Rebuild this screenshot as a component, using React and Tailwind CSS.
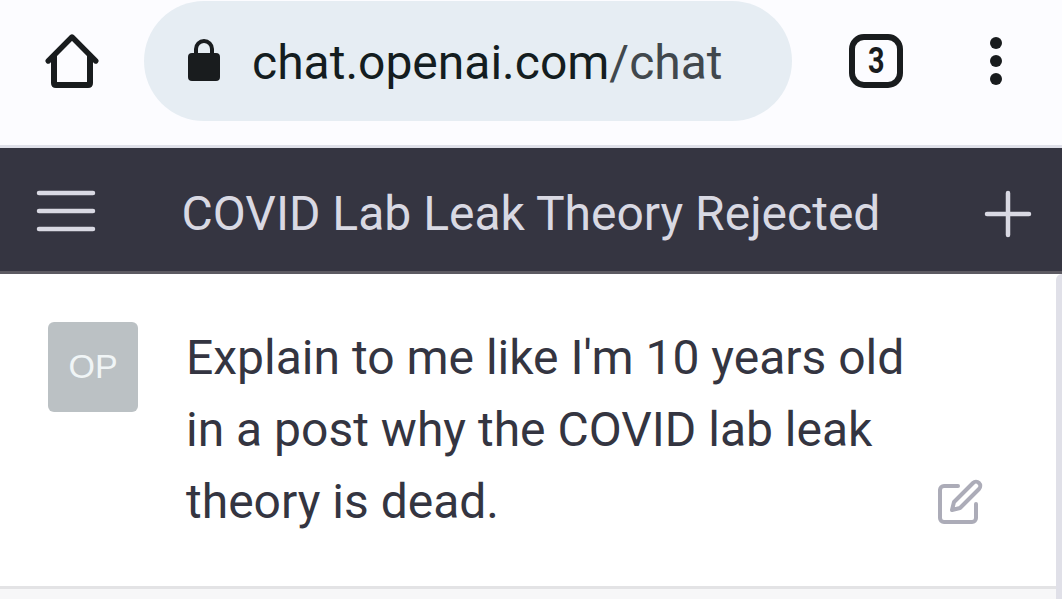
const message = ["Explain to me like I'm 10 years old", "in a post why the COVID lab leak", "theory is dead."];

function BrowserBar() {
  return (
    <div className="flex h-[148px] items-start border-b-[3px] border-[#dfe0e9] bg-[#fcfcff] text-[#191c1e]">
      <svg className="mt-[31px] ml-[42px] h-[60px] w-[60px] shrink-0" viewBox="0 0 60 60" fill="none" stroke="currentColor" strokeWidth="6">
        <path d="M12 24v28q0 2 2 2h32q2 0 2-2V24" />
        <path d="M6.2 30 30 6l23.8 24" strokeWidth="5.4" strokeLinecap="round" strokeLinejoin="round" />
      </svg>

      <div className="mt-px ml-[42px] flex h-[120px] w-[648px] shrink-0 items-center rounded-full bg-[#e6edf3] pl-11">
        <svg className="-mt-0.5 h-[42px] w-8 shrink-0" viewBox="0 0 32 42" fill="none">
          <rect y="14" width="32" height="28" rx="4" fill="currentColor" />
          <path d="M8 16V10a8 8 0 0 1 16 0v6" stroke="currentColor" strokeWidth="4" />
        </svg>
        <span className="mt-1 ml-8 text-[48px] leading-[60px] whitespace-nowrap text-[#141d20]">
          chat.openai.com<span className="text-[#41484d]">/chat</span>
        </span>
      </div>

      <div className="mt-[34px] ml-[57px] flex h-[54px] w-[54px] shrink-0 items-center justify-center rounded-[15px] border-[6px] border-[#191c1e] text-[36px] leading-none font-bold">
        <span className="scale-x-80">3</span>
      </div>

      <div className="mt-[37px] ml-[87px] flex flex-col gap-1.5">
        <span className="h-3 w-3 rounded-full bg-current" />
        <span className="h-3 w-3 rounded-full bg-current" />
        <span className="h-3 w-3 rounded-full bg-current" />
      </div>
    </div>
  );
}

function ChatHeader() {
  return (
    <header className="flex h-[126px] items-start border-b-[3px] border-[#5c5a62] bg-[#353541] text-[#d9d9e3]">
      <svg className="mt-[27px] ml-[30px] h-[72px] w-[72px] shrink-0" viewBox="0 0 24 24" fill="none" stroke="currentColor" strokeWidth="1.5" strokeLinecap="round">
        <path d="M3 6h18M3 12h18M3 18h18" />
      </svg>
      <h1 className="mt-[30px] flex-1 pr-3 text-center text-[48px] leading-[72px] whitespace-nowrap">COVID Lab Leak Theory Rejected</h1>
      <svg className="mt-[30px] mr-[18px] h-[72px] w-[72px] shrink-0" viewBox="0 0 24 24" fill="none" stroke="currentColor" strokeWidth="1.5" strokeLinecap="round">
        <path d="M12 5v14M5 12h14" />
      </svg>
    </header>
  );
}

export default function App() {
  return (
    <div className="flex h-[599px] w-[1062px] flex-col overflow-hidden bg-white font-['Roboto',sans-serif]">
      <BrowserBar />
      <ChatHeader />

      <div className="flex min-h-0 flex-1">
        <main className="flex w-[1056px] flex-col">
          <div className="flex h-[315px] shrink-0 items-start border-b-[3px] border-[#e3e3e5] pt-12 pl-12">
            <div className="flex h-[90px] w-[90px] shrink-0 items-center justify-center rounded-[6px] bg-[#bbc1c4] pb-0.5 font-['Liberation_Sans',sans-serif] text-[34px] leading-none text-[#f0f5f6]">
              OP
            </div>
            <p className="ml-12 w-[750px] text-[48px] leading-[72px] whitespace-nowrap text-[#343541]">
              {message.map((line) => (
                <span key={line} className="block">{line}</span>
              ))}
            </p>
            <svg className="mt-[156px] h-12 w-12 shrink-0 text-[#acacb8]" viewBox="0 0 24 24" fill="none" stroke="currentColor" strokeWidth="2" strokeLinecap="round" strokeLinejoin="round">
              <path d="M11 4H4a2 2 0 0 0-2 2v14a2 2 0 0 0 2 2h14a2 2 0 0 0 2-2v-7" />
              <path d="M18.5 2.5a2.121 2.121 0 0 1 3 3L12 15l-4 1 1-4 9.5-9.5z" />
            </svg>
          </div>
          <div className="flex-1 bg-[#f7f7f8]" />
        </main>
        {/* scrollbar thumb */}
        <div className="w-1.5 rounded-tl-[6px] bg-[#e0e0e8]" />
      </div>
    </div>
  );
}
